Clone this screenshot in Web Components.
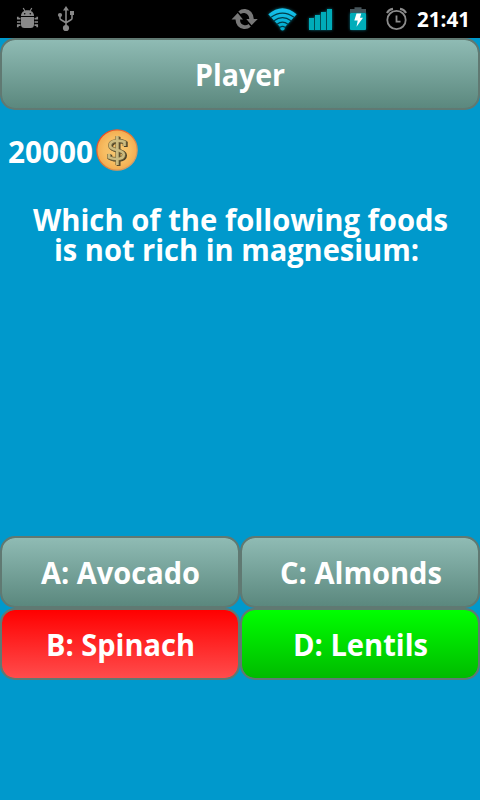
<!DOCTYPE html>
<html lang="en">
<head>
<meta charset="utf-8">
<title>Quiz</title>
<style>
html,body{margin:0;height:100%;overflow:hidden}
body{font-family:"Open Sans","Noto Sans",sans-serif;background:#0099cc}
</style>
</head>
<body>
<quiz-app></quiz-app>
<script>
/* One line of bold text condensed to a given advance width. */
class FitText extends HTMLElement{
  connectedCallback(){
    const w=+this.getAttribute('width'),s=+(this.getAttribute('size')||30);
    const root=this.attachShadow({mode:'open'});
    root.innerHTML=`<style>:host{display:block;flex:none;width:${w}px;height:${s}px;color:#fff}
      svg{display:block;overflow:visible}
      text{font-weight:700;font-size:${s*1.03}px;fill:currentColor}</style>
      <svg width="${w}" height="${s}"><text x="0" y="${Math.round(s*.8)}" textLength="${w}" lengthAdjust="spacingAndGlyphs"></text></svg>`;
    root.querySelector('text').textContent=this.getAttribute('text');
  }
}
customElements.define('fit-text',FitText);

class StatusBar extends HTMLElement{
  constructor(){
    super();
    this.attachShadow({mode:'open'}).innerHTML=`<style>
      :host{display:flex;height:38px;background:#000;box-sizing:border-box;padding:0 10px 0 0;align-items:flex-start}
      svg{display:block;flex:none}
      .glow{filter:drop-shadow(0 0 1.5px #067184)}
      .grow{flex:1}
      fit-text{margin-top:11px}
    </style>
    <svg width="86" height="38" fill="#888" stroke="none">
      <path d="M21 16c0-3.500 2.500-5.800 6.500-5.800s6.500 2.300 6.500 5.800z"/>
      <path d="M23.200 8l2 3.500M31.800 8l-2 3.500" stroke="#888" stroke-width="1.200"/>
      <path d="M21 17h13v7.500q0 3.500-3.500 3.500h-6q-3.500 0-3.500-3.500z"/>
      <circle cx="24.700" cy="13.700" r=".8" fill="#000"/><circle cx="30.300" cy="13.700" r=".8" fill="#000"/>
      <path d="M20.500 18.700h-2.700v-2M20.500 22h-3.500M20.500 25.200h-2.700v2M34.500 18.700h2.700v-2M34.500 22h3.500M34.500 25.200h2.700v2" fill="none" stroke="#888" stroke-width="1.700"/>
      <path d="M66 6l3 4.500h-6z"/><circle cx="66" cy="28" r="3.100"/>
      <circle cx="60" cy="15" r="2.100"/><path d="M70 11h4v4h-4z"/>
      <path d="M66 28V9M60 15v3.200q0 1 1 1.500l5 3M72 14v4.200q0 1-1 1.500l-5 3" fill="none" stroke="#888" stroke-width="1.600"/>
    </svg>
    <div class="grow"></div>
    <svg width="36" height="38" viewBox="228 0 36 38">
      <path d="M231.500 19.500l6.200-6.500 5.300 6.500h-3q0 5 4.500 5.700 2.500.3 4-1.200l2.300 2.700q-3 2.600-7 2.200-7.800-1-8.300-9.400zM257.800 19l-6.200 6.300-5.300-6.300h3q-.3-5-4.800-5.900-2.200-.2-3.800 1l-2.400-2.600q3-2.800 7-2.400 7.700 1 8.500 9.900z" fill="#777"/>
    </svg>
    <svg class="glow" width="38" height="38" viewBox="264 0 38 38">
      <defs><linearGradient id="w" x2="0" y2="1"><stop stop-color="#18c2ee"/><stop offset="1" stop-color="#00a8c8"/></linearGradient></defs>
      <path d="M268.300 14.300Q282.500 2 296.700 14.300L284.500 27.500a2.200 2.200 0 1 1-4 0z" fill="url(#w)"/>
      <g fill="none" stroke="#003c49" stroke-width="1.200"><path d="M271 17.300q11.500-8.500 23 0"/><path d="M274 20.800q8.500-6.500 17 0"/><path d="M277 24.200q5.500-4.300 11 0"/><path d="M280 27.200q2.500-1.700 5 0"/></g>
    </svg>
    <svg width="40" height="38" viewBox="302 0 40 38" fill="#00acb9">
      <path class="glow" d="M309 18h6v-3h6v-3h6v-3h5v21h-23z" fill="#004f57"/>
      <rect x="309" y="18" width="5" height="12"/><rect x="315" y="15" width="5" height="15"/><rect x="321" y="12" width="5" height="18"/><rect x="327" y="9" width="5" height="21"/>
    </svg>
    <svg width="36" height="38" viewBox="342 0 36 38">
      <path d="M350 9h4.500V7.300h7V9h4.500v4h-16z" fill="#46545a"/>
      <g class="glow"><rect x="350" y="13" width="16" height="17" rx="1" fill="#00adba"/></g>
      <path d="M356.500 13.500h4.800l-1.300 4.300h3l-6.500 9 1.200-6.300h-3.400z" fill="#fff"/>
    </svg>
    <svg width="39" height="38" viewBox="378 0 39 38" fill="none" stroke="#8c8c8c" stroke-width="1.800">
      <circle cx="396.500" cy="20" r="9.200"/><path d="M396.500 15.500v6.200h4"/><path d="M387 13q1.800-3.700 6-4.200M406 13q-1.800-3.700-6-4.200" stroke-width="2.200"/>
    </svg>
    <fit-text text="21:41" width="53" size="20"></fit-text>`;
  }
}
customElements.define('status-bar',StatusBar);

class GradientButton extends HTMLElement{
  constructor(){
    super();
    this.attachShadow({mode:'open'}).innerHTML=`<style>
      :host{display:flex;box-sizing:border-box;height:72px;justify-content:center;padding-top:22px;border:2px solid #607972;border-radius:15px;
        background:linear-gradient(#8fbbb4,#5b887e) padding-box,#607972}
      :host([tone=wrong]){background:linear-gradient(#ff0000,#ff4c4c) padding-box,#607972}
      :host([tone=right]){background:linear-gradient(#00ff00,#00bb00) padding-box,#607972}
    </style><slot></slot>`;
  }
}
customElements.define('gradient-button',GradientButton);

class CoinIcon extends HTMLElement{
  constructor(){
    super();
    this.attachShadow({mode:'open'}).innerHTML=`<style>:host{display:block;width:42px;height:42px}svg{display:block}</style>
      <svg width="42" height="42"><defs>
      <radialGradient id="c"><stop stop-color="#f6c873"/><stop offset=".65" stop-color="#f7bd62"/><stop offset="1" stop-color="#f3ac50"/></radialGradient>
      <linearGradient id="r" x2="1" y2="1"><stop stop-color="#f03b20"/><stop offset=".5" stop-color="#e07a35"/><stop offset="1" stop-color="#c9ad80"/></linearGradient>
      <g id="d" fill="none"><path d="M28.500 17v-4q-3.500-1.600-8-1.200-6.500.5-6.500 4.700 0 3.200 6.800 4.500t7 4.500q0 4.200-6.800 4.500-4.500 0-8-1.700v-3.500"/><path d="M21.300 7v29"/></g></defs>
      <circle cx="21" cy="21" r="20.200" fill="url(#c)" stroke="url(#r)" stroke-width="1.200"/>
      <use href="#d" stroke="#494028" stroke-width="3.800" transform="translate(1.300 .9)"/>
      <use href="#d" stroke="#77683e" stroke-width="4" transform="translate(.1 .1)"/>
      <use href="#d" stroke="#cbbb80" stroke-width="2.600"/>
      </svg>`;
  }
}
customElements.define('coin-icon',CoinIcon);

class QuizApp extends HTMLElement{
  constructor(){
    super();
    this.attachShadow({mode:'open'}).innerHTML=`<style>
      :host{display:flex;flex-direction:column;width:480px;height:800px;background:#0099cc}
      .score{display:flex;padding:19px 0 0 8px;gap:3px;height:42px}
      .score fit-text{margin-top:10px}
      .question{display:flex;flex-direction:column;align-items:center;padding-top:36px;height:329px;box-sizing:border-box;margin-bottom:36px}
      .question fit-text:first-child{margin-left:1px}
      .question fit-text:last-child{margin-right:8px}
      .answers{display:grid;grid-template-columns:240px 240px}
      .answers fit-text{margin-left:1px}
    </style>
    <status-bar></status-bar>
    <gradient-button><fit-text text="Player" width="90"></fit-text></gradient-button>
    <div class="score"><fit-text text="20000" width="85"></fit-text><coin-icon></coin-icon></div>
    <div class="question">
      <fit-text text="Which of the following foods" width="415"></fit-text>
      <fit-text text="is not rich in magnesium:" width="365"></fit-text>
    </div>
    <div class="answers">
      <gradient-button><fit-text text="A: Avocado" width="159"></fit-text></gradient-button>
      <gradient-button><fit-text text="C: Almonds" width="162"></fit-text></gradient-button>
      <gradient-button tone="wrong"><fit-text text="B: Spinach" width="149"></fit-text></gradient-button>
      <gradient-button tone="right"><fit-text text="D: Lentils" width="135"></fit-text></gradient-button>
    </div>`;
  }
}
customElements.define('quiz-app',QuizApp);
</script>
</body>
</html>
